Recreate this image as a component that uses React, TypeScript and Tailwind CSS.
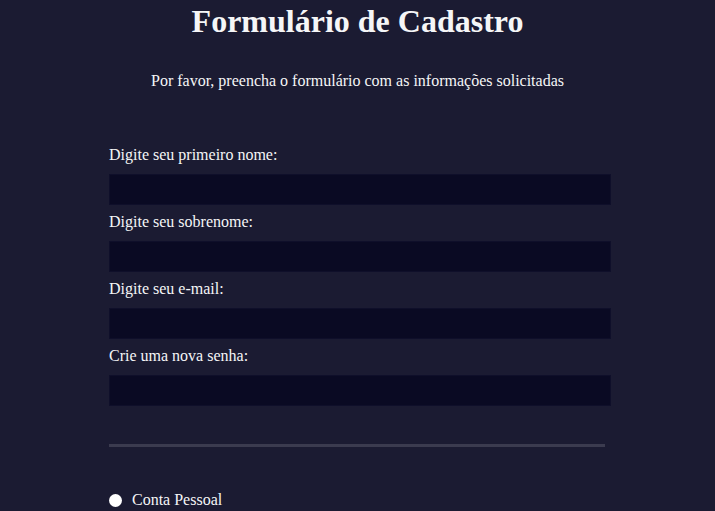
export default function App() {
  const fields = [
    { label: "Digite seu primeiro nome:", type: "text" },
    { label: "Digite seu sobrenome:", type: "text" },
    { label: "Digite seu e-mail:", type: "email" },
    { label: "Crie uma nova senha:", type: "password" },
  ];

  return (
    <div
      className="min-h-[511px] bg-[#1b1b32] text-[#f5f6f7]"
      style={{ fontFamily: '"Liberation Serif", "Times New Roman", serif' }}
    >
      <h1 className="pt-[3px] text-center text-[32px] font-bold leading-[37px]">
        Formulário de Cadastro
      </h1>
      <p className="mt-[32px] text-center text-[16px] leading-[18px]">
        Por favor, preencha o formulário com as informações solicitadas
      </p>

      <form className="ml-[109px] mt-[56px] w-[502px]">
        {/* Campos */}
        <div className="pb-[38px]">
          {fields.map((f) => (
            <div key={f.label}>
              <label className="mt-2 block text-[16px] leading-[18px]">{f.label}</label>
              <input
                type={f.type}
                className="mt-[10px] block h-[31px] w-full border border-[#0f0f2a] bg-[#0a0a23] outline-none"
              />
            </div>
          ))}
        </div>
        <div className="h-[3px] w-[496px] bg-[#3b3b4f]" />

        {/* Tipo de conta */}
        <div className="mt-[44px] flex items-center gap-[10px]">
          <span className="h-[13px] w-[13px] rounded-full bg-white" />
          <span className="text-[16px] leading-[18px]">Conta Pessoal</span>
        </div>
      </form>
    </div>
  );
}
